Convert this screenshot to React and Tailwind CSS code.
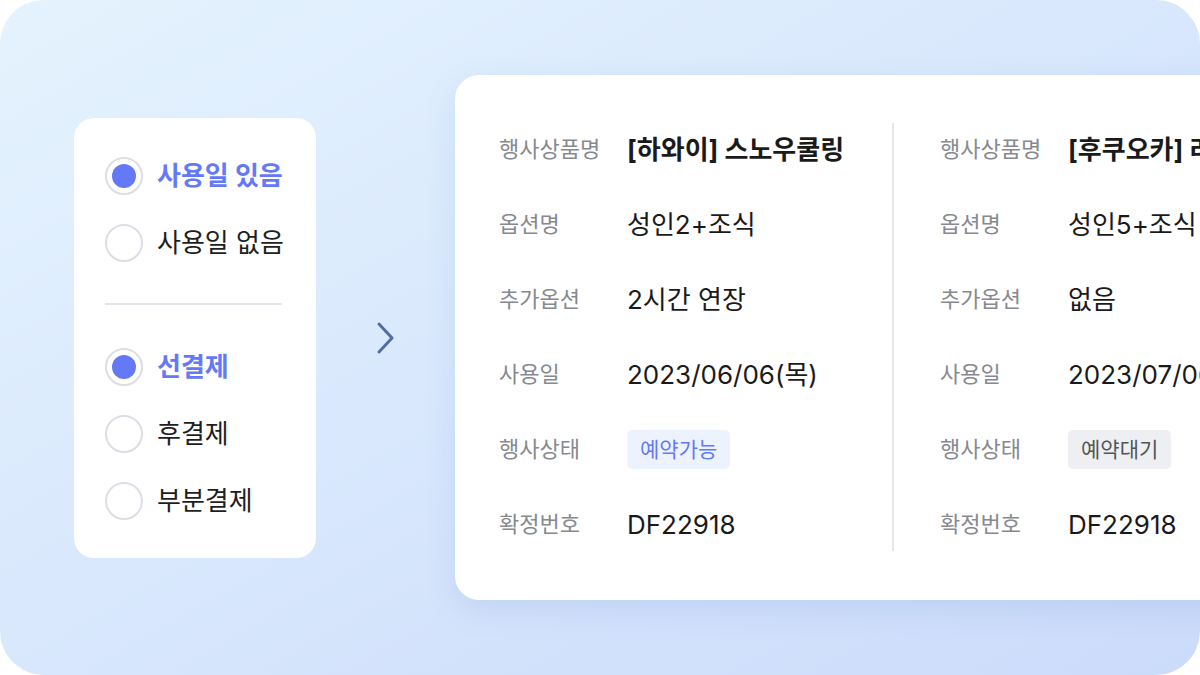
const font = { fontFamily: '"Inter", "Noto Sans CJK KR", sans-serif' };

const rows = [
  { label: '행사상품명', a: '[하와이] 스노우쿨링', b: '[후쿠오카] 라멘투어', bold: true },
  { label: '옵션명', a: '성인2+조식', b: '성인5+조식' },
  { label: '추가옵션', a: '2시간 연장', b: '없음' },
  { label: '사용일', a: '2023/06/06(목)', b: '2023/07/06(목)' },
  { label: '행사상태', badge: true },
  { label: '확정번호', a: 'DF22918', b: 'DF22918' },
];

function Radio({ label, checked }) {
  return (
    <div className="flex items-center h-[38px] gap-[14px]">
      <span className="w-[38px] h-[38px] rounded-full border-2 border-[#dcdee4] flex items-center justify-center shrink-0">
        {checked && <span className="w-[24px] h-[24px] rounded-full bg-[#6479f8]" />}
      </span>
      <span
        className={
          checked
            ? 'text-[26px] font-bold text-[#6479f8] whitespace-nowrap'
            : 'text-[26px] text-[#1e1e1e] whitespace-nowrap'
        }
      >
        {label}
      </span>
    </div>
  );
}

function Badge({ type }) {
  if (type === 'ok') {
    return (
      <span className="inline-flex items-center h-[39px] px-[13px] rounded-[5px] bg-[#edf3fe] text-[#6479f8] text-[21px]">
        예약가능
      </span>
    );
  }
  return (
    <span className="inline-flex items-center h-[39px] px-[13px] rounded-[5px] bg-[#eeeff2] text-[#555] text-[21px]">
      예약대기
    </span>
  );
}

function Column({ side }) {
  return (
    <div className="flex flex-col w-[437px] shrink-0">
      {rows.map((r) => (
        <div key={r.label} className="flex items-center h-[75px]">
          <span className="w-[128px] shrink-0 text-[22px] text-[#86898f]">{r.label}</span>
          {r.badge ? (
            <Badge type={side === 'a' ? 'ok' : 'wait'} />
          ) : (
            <span
              className={
                r.bold
                  ? 'text-[26px] font-bold text-[#1a1a1a] whitespace-nowrap'
                  : 'text-[26px] text-[#1a1a1a] whitespace-nowrap'
              }
            >
              {r[side]}
            </span>
          )}
        </div>
      ))}
    </div>
  );
}

export default function App() {
  return (
    <div className="w-[1200px] h-[675px] bg-white" style={font}>
      <div className="w-full h-full rounded-[44px] overflow-hidden bg-gradient-to-br from-[#e5f3fe] to-[#cbdbfa] flex items-center pl-[74px]">
        <div className="w-[242px] shrink-0 bg-white rounded-[20px] pt-[39px] pb-[38px] pl-[31px] pr-[34px] flex flex-col">
          <div className="flex flex-col gap-[29px]">
            <Radio label="사용일 있음" checked />
            <Radio label="사용일 없음" />
          </div>
          <div className="h-[2px] bg-[#e3e5ea] mt-[41px] mb-[43px]" />
          <div className="flex flex-col gap-[29px]">
            <Radio label="선결제" checked />
            <Radio label="후결제" />
            <Radio label="부분결제" />
          </div>
        </div>

        <div className="w-[139px] shrink-0 flex justify-center">
          <svg width="24" height="40" viewBox="0 0 24 40" fill="none">
            <path d="M5 6 L18 20 L5 34" stroke="#4f6ea9" strokeWidth="3" strokeLinecap="round" strokeLinejoin="round" />
          </svg>
        </div>

        <div className="shrink-0 bg-white rounded-[24px] shadow-[0_10px_30px_rgba(90,130,210,0.15)] pt-[37px] pb-[38px] pl-[44px] flex w-[900px]">
          <Column side="a" />
          <div className="w-[2px] bg-[#e6e7ea] my-[11px] shrink-0 mr-[46px] -ml-[44px]" />
          <Column side="b" />
        </div>
      </div>
    </div>
  );
}
